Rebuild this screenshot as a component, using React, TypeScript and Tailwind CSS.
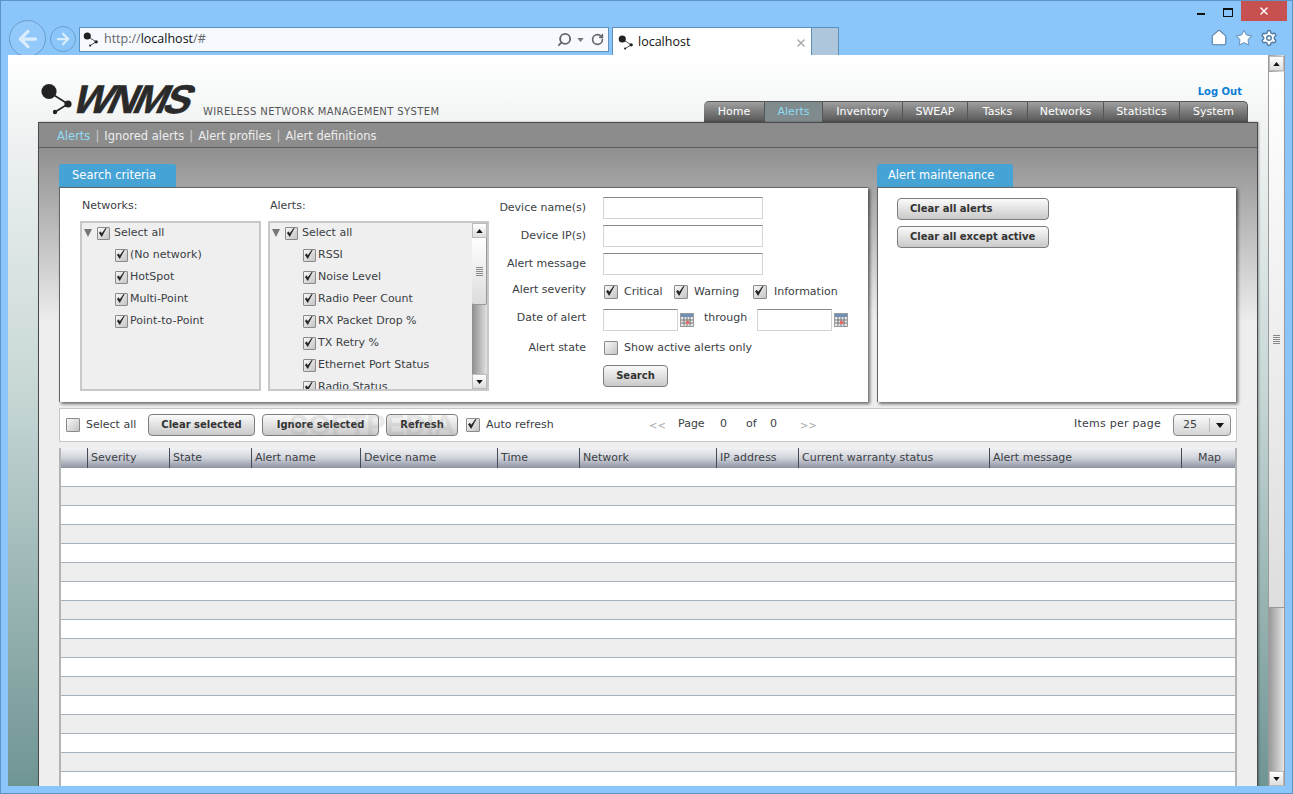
import { ArrowLeft, ArrowRight, Home, RotateCw, Search, Settings, Star, X } from "lucide-react"

const navTabs = [
  { name: "Home", w: "w-[61px]", cls: "rounded-tl-[5px]" },
  { name: "Alerts", w: "w-[58px]", active: true, cls: "" },
  { name: "Inventory", w: "w-[80px]", cls: "" },
  { name: "SWEAP", w: "w-[65px]", cls: "" },
  { name: "Tasks", w: "w-[60px]", cls: "" },
  { name: "Networks", w: "w-[76px]", cls: "" },
  { name: "Statistics", w: "w-[76px]", cls: "" },
  { name: "System", w: "w-[68px]", cls: "rounded-tr-[5px]" },
]

const columns = [
  { name: "", w: "w-[29px]" },
  { name: "Severity", w: "w-[82px]" },
  { name: "State", w: "w-[82px]" },
  { name: "Alert name", w: "w-[109px]" },
  { name: "Device name", w: "w-[137px]" },
  { name: "Time", w: "w-[82px]" },
  { name: "Network", w: "w-[137px]" },
  { name: "IP address", w: "w-[82px]" },
  { name: "Current warranty status", w: "w-[191px]" },
  { name: "Alert message", w: "w-[192px]" },
]

const rows = Array.from({ length: 17 }, (_, i) => i)

function NodeIcon({ className }: { className: string }) {
  return (
    <svg viewBox="0 0 36 32" className={className}>
      <path d="M9 9 L28 21 L15 29" stroke="#222" strokeWidth="1.6" fill="none" />
      <circle cx="9" cy="8.5" r="7.6" fill="#222" />
      <circle cx="28" cy="21" r="3.6" fill="#222" />
      <circle cx="15" cy="29" r="2.2" fill="#222" />
    </svg>
  )
}

function Check({ checked = true, small, cls = "" }: { checked?: boolean; small?: boolean; cls?: string }) {
  return (
    <span className={`relative block shrink-0 rounded-[1px] border border-[#8a8a8a] bg-gradient-to-br from-[#f8f8f8] to-[#c4c4c4] ${small ? "h-[13px] w-[13px]" : "h-[14px] w-[14px]"} ${cls}`}>
      {checked && (
        <svg viewBox="0 0 14 14" className="absolute -top-[1px] -left-[1px] h-full w-full">
          <path d="M3 7.5 L6 12 L11.5 1.5 L6.2 8.6 L4.4 6.2 Z" fill="#222" stroke="#222" strokeWidth="1" />
        </svg>
      )}
    </span>
  )
}

function Btn({ label, w }: { label: string; w: string }) {
  return (
    <button className={`h-[22px] ${w} shrink-0 rounded-[4px] border border-[#7d7d7d] bg-gradient-to-b from-[#fbfbfb] to-[#c9c9c9] pb-[2px] text-[10px] font-bold text-[#333]`}>
      {label}
    </button>
  )
}

function Arrow({ up }: { up?: boolean }) {
  return (
    <span className="flex h-[15px] w-[15px] shrink-0 items-center justify-center border border-[#bbb] bg-gradient-to-b from-white to-[#ddd]">
      <svg viewBox="0 0 8 5" className="h-[4px] w-[7px]">
        <path d={up ? "M0 5 L4 0 L8 5 Z" : "M0 0 L4 5 L8 0 Z"} fill="#111" />
      </svg>
    </span>
  )
}

function Grip() {
  return (
    <span className="flex w-[7px] flex-col gap-[1px]">
      <span className="h-px bg-[#888]" />
      <span className="h-px bg-[#888]" />
      <span className="h-px bg-[#888]" />
      <span className="h-px bg-[#888]" />
      <span className="h-px bg-[#888]" />
    </span>
  )
}

function TreeRow({ label, root }: { label: string; root?: boolean }) {
  return (
    <div className={`flex h-[22px] items-center ${root ? "pl-[2px]" : "pl-[33px]"}`}>
      {root && (
        <svg viewBox="0 0 8 8" className="mr-[5px] h-[8px] w-[8px]">
          <path d="M0 0 H8 L4 8 Z" fill="#777" />
        </svg>
      )}
      <Check small />
      <span className={root ? "ml-[4px]" : "ml-[2px]"}>{label}</span>
    </div>
  )
}

function Field({ label, raised, children }: { label: string; raised?: boolean; children: React.ReactNode }) {
  return (
    <div className="flex h-[22px] items-center">
      <span className={`mr-[17px] w-[97px] shrink-0 text-right ${raised ? "-translate-y-[2px]" : ""}`}>{label}</span>
      {children}
    </div>
  )
}

function TextBox({ w }: { w: string }) {
  return <span className={`block h-[22px] ${w} shrink-0 border border-[#d4d4d4] border-t-[#888] bg-white`} />
}

function Calendar() {
  return (
    <svg viewBox="0 0 14 14" className="ml-[2px] h-[14px] w-[14px] shrink-0">
      <rect x="0.5" y="0.5" width="13" height="13" fill="#e8e8e8" stroke="#9a9a9a" />
      <rect x="1" y="1" width="12" height="3" fill="#6f8fb5" />
      <path d="M1 7 H13 M1 10 H13 M4 4 V13 M7 4 V13 M10 4 V13" stroke="#777" strokeWidth="1" />
      <rect x="6" y="8" width="3" height="3" fill="#e66" />
    </svg>
  )
}

export default function App() {
  return (
    <div className="flex h-[794px] w-[1293px] flex-col overflow-hidden border border-[#5f93c4] bg-[#8bc6fa] font-['DejaVu_Sans',sans-serif] text-[11px] text-[#3b4045]">
      {/* Browser chrome */}
      <div className="relative z-0 flex h-[54px] shrink-0 font-['Open_Sans',sans-serif]">
        <div className="ml-[8px] mt-[19px] flex h-[37px] w-[37px] shrink-0 items-center justify-center rounded-full border border-[#6b9ccb] bg-[#92c9fa]">
          <ArrowLeft size={26} strokeWidth={3} className="text-[#d9edfd]" />
        </div>
        <div className="ml-[4px] mt-[25px] flex h-[26px] w-[26px] shrink-0 items-center justify-center rounded-full border border-[#6b9ccb]">
          <ArrowRight size={18} strokeWidth={3} className="text-[#d9edfd]" />
        </div>
        <div className="ml-[3px] mt-[26px] flex h-[25px] w-[530px] shrink-0 items-center border border-[#5f8fbb] bg-[#f6faff] pl-[3px] pr-[4px] text-[12.5px]">
          <NodeIcon className="h-[15px] w-[17px] shrink-0" />
          <span className="ml-[4px] text-[#666]">http://</span>
          <span className="text-[#111]">localhost</span>
          <span className="text-[#666]">/#</span>
          <Search size={15} strokeWidth={3} className="ml-auto -scale-x-100 text-[#666]" />
          <svg viewBox="0 0 8 5" className="ml-[5px] h-[4px] w-[7px]">
            <path d="M0 0 L4 5 L8 0 Z" fill="#777" />
          </svg>
          <RotateCw size={13} strokeWidth={3} className="ml-[7px] text-[#666]" />
        </div>
        <div className="ml-[3px] mt-[26px] flex h-[28px] w-[200px] shrink-0 items-center border border-b-0 border-[#5f8fbb] bg-white pl-[5px] pr-[4px] pt-[2px] text-[12.5px] text-[#111]">
          <NodeIcon className="h-[15px] w-[17px] shrink-0" />
          <span className="ml-[3px]">localhost</span>
          <X size={12} strokeWidth={3} className="ml-auto text-[#aaa]" />
        </div>
        <div className="mt-[26px] h-[28px] w-[27px] shrink-0 border border-b-0 border-l-0 border-[#5f8fbb] bg-[#adc6dc]" />
        <div className="ml-auto mr-[3px] flex w-[92px] flex-col items-end">
          <div className="flex h-[20px] w-[92px] items-start">
            <span className="mt-[12px] h-[2px] w-[8px] bg-[#111]" />
            <span className="ml-[18px] mt-[7px] h-[9px] w-[10px] border border-t-[2px] border-[#111]" />
            <span className="ml-[8px] flex h-[20px] w-[46px] items-center justify-center bg-[#c75050]">
              <X size={12} strokeWidth={3} className="text-white" />
            </span>
          </div>
        </div>
        <div className="absolute right-[14px] top-[28px] flex gap-[7px]">
          <Home size={18} strokeWidth={1.5} className="fill-white text-[#557ea6]" />
          <Star size={18} strokeWidth={1.5} className="fill-white text-[#6f9ac2]" />
          <Settings size={18} strokeWidth={2} className="fill-white text-[#557ea6]" />
        </div>
      </div>

      {/* Viewport */}
      <div className="relative z-10 mx-[7px] flex h-[731px] w-[1277px] shrink-0">
        <div className="flex w-[1260px] shrink-0 flex-col overflow-hidden bg-[linear-gradient(#ffffff,#eef1f1_12%,#c8d8d7_45%,#6f9593)]">
          {/* Site header */}
          <div className="flex h-[67px] shrink-0 items-end justify-between pl-[32px] pr-[20px]">
            <div className="mb-[4px] flex items-end">
              <NodeIcon className="mb-[3px] h-[32px] w-[36px]" />
              <span className="mb-[1px] inline-block w-[124px] -skew-x-[24deg] font-['Liberation_Sans',sans-serif] text-[40px] leading-[36px] font-bold tracking-[-3px] text-[#2a2a2a] [-webkit-text-stroke:0.6px_#2a2a2a]">
                WNMS
              </span>
              <span className="-mb-[1px] ml-[3px] text-[10px] leading-[14px] tracking-[0.38px] text-[#555]">WIRELESS NETWORK MANAGEMENT SYSTEM</span>
            </div>
            <div className="flex flex-col items-end">
              <a className="mb-[2px] mr-[6px] text-[10px] font-bold text-[#0b7fd6]">Log Out</a>
              <div className="flex">
                {navTabs.map((t) => (
                  <div
                    key={t.name}
                    className={`flex h-[21px] ${t.w} ${t.cls} items-center justify-center border-t border-r border-[#555] ${
                      t.active ? "bg-[#7f8b8d] text-[#8fdcf5]" : "bg-gradient-to-b from-[#a0a0a0] to-[#555] text-white"
                    }`}
                  >
                    {t.name}
                  </div>
                ))}
              </div>
            </div>
          </div>

          {/* App panel */}
          <div className="ml-[30px] mr-[10px] flex min-h-0 flex-1 flex-col border-x border-t border-[#4a4a4a] bg-[#eeeeee] shadow-[1px_0_2px_rgba(0,0,0,0.3)]">
            <div className="flex h-[25px] shrink-0 items-center border-b border-[#5c5c5c] bg-[#8c8c8c] pl-[18px] pt-[4px] text-[11.5px] text-[#eeeeee]">
              <span className="text-[#8fdcf5]">Alerts</span>
              <span className="mx-[5px] text-[#ccc]">|</span>
              <span>Ignored alerts</span>
              <span className="mx-[5px] text-[#ccc]">|</span>
              <span>Alert profiles</span>
              <span className="mx-[5px] text-[#ccc]">|</span>
              <span>Alert definitions</span>
            </div>

            <div className="flex min-h-0 flex-1 flex-col bg-[linear-gradient(#8f8f8f,#a8a8a8_45px,#eeeeee_175px)] pl-[20px] pr-[21px] pt-[16px]">
              <div className="flex shrink-0 gap-[9px]">
                {/* Search criteria */}
                <div className="w-[809px] shrink-0">
                  <div className="flex h-[23px] w-[117px] items-center rounded-t-[3px] bg-[#46a3d6] pl-[13px] text-[11.5px] text-white">Search criteria</div>
                  <div className="flex h-[215px] border-t border-l border-[#666] bg-white pl-[20px] shadow-[2px_2px_3px_rgba(0,0,0,0.55)]">
                    <div className="w-[181px] shrink-0 pt-[11px]">
                      <div className="mb-[8px] h-[14px] pl-[2px] leading-[14px]">Networks:</div>
                      <div className="h-[170px] overflow-hidden border-2 border-[#c8c8c8] bg-[#efefef]">
                        <div className="-mt-[1px]">
                          <TreeRow root label="Select all" />
                          <TreeRow label="(No network)" />
                          <TreeRow label="HotSpot" />
                          <TreeRow label="Multi-Point" />
                          <TreeRow label="Point-to-Point" />
                        </div>
                      </div>
                    </div>
                    <div className="ml-[7px] w-[221px] shrink-0 pt-[11px]">
                      <div className="mb-[8px] h-[14px] pl-[2px] leading-[14px]">Alerts:</div>
                      <div className="flex h-[170px] overflow-hidden border-2 border-[#c8c8c8] bg-[#efefef]">
                        <div className="-mt-[1px] flex-1">
                          <TreeRow root label="Select all" />
                          <TreeRow label="RSSI" />
                          <TreeRow label="Noise Level" />
                          <TreeRow label="Radio Peer Count" />
                          <TreeRow label="RX Packet Drop %" />
                          <TreeRow label="TX Retry %" />
                          <TreeRow label="Ethernet Port Status" />
                          <TreeRow label="Radio Status" />
                        </div>
                        <div className="flex w-[15px] shrink-0 flex-col bg-gradient-to-r from-[#8e8e8e] to-[#e2e2e2]">
                          <Arrow up />
                          <div className="flex h-[67px] shrink-0 items-center justify-center rounded-b-[2px] border-r border-b border-[#999] bg-gradient-to-b from-white to-[#dcdcdc]">
                            <Grip />
                          </div>
                          <div className="flex-1" />
                          <Arrow />
                        </div>
                      </div>
                    </div>
                    <div className="flex flex-1 flex-col gap-[6px] pt-[9px]">
                      <Field label="Device name(s)">
                        <TextBox w="w-[160px]" />
                      </Field>
                      <Field label="Device IP(s)">
                        <TextBox w="w-[160px]" />
                      </Field>
                      <Field label="Alert message">
                        <TextBox w="w-[160px]" />
                      </Field>
                      <Field label="Alert severity" raised>
                        <Check cls="ml-[1px]" />
                        <span className="ml-[6px] w-[50px]">Critical</span>
                        <Check />
                        <span className="ml-[6px] w-[59px]">Warning</span>
                        <Check />
                        <span className="ml-[7px]">Information</span>
                      </Field>
                      <Field label="Date of alert" raised>
                        <TextBox w="w-[75px]" />
                        <Calendar />
                        <span className="ml-[10px] w-[53px] -translate-y-[2px]">through</span>
                        <TextBox w="w-[75px]" />
                        <Calendar />
                      </Field>
                      <Field label="Alert state">
                        <Check checked={false} cls="ml-[1px]" />
                        <span className="ml-[6px]">Show active alerts only</span>
                      </Field>
                      <Field label="">
                        <Btn label="Search" w="w-[65px]" />
                      </Field>
                    </div>
                  </div>
                </div>

                {/* Alert maintenance */}
                <div className="flex-1">
                  <div className="flex h-[23px] w-[136px] items-center rounded-t-[3px] bg-[#46a3d6] pl-[11px] text-[11.5px] text-white">Alert maintenance</div>
                  <div className="flex h-[215px] flex-col gap-[6px] border-t border-l border-[#666] bg-white pl-[19px] pt-[10px] shadow-[2px_2px_3px_rgba(0,0,0,0.55)]">
                    <button className="h-[22px] w-[152px] rounded-[4px] border border-[#7d7d7d] bg-gradient-to-b from-[#fbfbfb] to-[#c9c9c9] pb-[2px] pl-[12px] text-left text-[10px] font-bold text-[#333]">Clear all alerts</button>
                    <button className="h-[22px] w-[152px] rounded-[4px] border border-[#7d7d7d] bg-gradient-to-b from-[#fbfbfb] to-[#c9c9c9] pb-[2px] pl-[12px] text-left text-[10px] font-bold text-[#333]">Clear all except active</button>
                  </div>
                </div>
              </div>

              {/* Toolbar */}
              <div className="relative -mr-[1px] mt-[6px] flex h-[34px] shrink-0 items-center border border-[#c6c6c6] bg-white pl-[6px] pr-[5px]">
                <Check checked={false} />
                <span className="ml-[6px] w-[62px] shrink-0">Select all</span>
                <Btn label="Clear selected" w="w-[107px]" />
                <span className="w-[7px] shrink-0" />
                <Btn label="Ignore selected" w="w-[117px]" />
                <span className="w-[7px] shrink-0" />
                <Btn label="Refresh" w="w-[72px]" />
                <span className="ml-[8px]">
                  <Check />
                </span>
                <span className="ml-[6px] w-[163px] shrink-0">Auto refresh</span>
                <span className="w-[29px] shrink-0 text-[10px] text-[#aaa]">&lt;&lt;</span>
                <span className="w-[42px] shrink-0 -translate-y-[1px]">Page</span>
                <span className="w-[26px] shrink-0 -translate-y-[1px]">0</span>
                <span className="w-[24px] shrink-0 -translate-y-[1px]">of</span>
                <span className="w-[30px] shrink-0 -translate-y-[1px]">0</span>
                <span className="text-[10px] text-[#aaa]">&gt;&gt;</span>
                <span className="ml-auto -translate-y-[1px] tracking-[0.25px]">Items per page</span>
                <div className="ml-[12px] flex h-[22px] w-[58px] items-center rounded-[4px] border border-[#8a8a8a] bg-gradient-to-b from-[#fbfbfb] to-[#d4d4d4] pl-[9px]">
                  <span className="w-[26px]">25</span>
                  <span className="h-[14px] w-px bg-[#bbb]" />
                  <svg viewBox="0 0 8 5" className="ml-[6px] h-[5px] w-[8px]">
                    <path d="M0 0 L4 5 L8 0 Z" fill="#111" />
                  </svg>
                </div>
                <span className="pointer-events-none absolute left-[229px] top-[0px] font-['Liberation_Sans',sans-serif] text-[29px] leading-[32px] font-bold text-[#999]/20">SOFTPEDIA</span>
              </div>

              {/* Alerts table */}
              <div className="-mr-[1px] mt-[6px] min-h-0 flex-1 overflow-hidden border-x-2 border-[#b4b4b4]">
                <div className="-mx-[2px] flex h-[20px] bg-gradient-to-b from-[#f2f2f4] via-[#d0d3da] to-[#8d93a3]">
                  {columns.map((c) => (
                    <div key={c.name} className={`${c.w} shrink-0 truncate border-r border-[#454a58] pl-[3px] leading-[19px]`}>
                      {c.name}
                    </div>
                  ))}
                  <div className="flex-1 text-center leading-[19px]">Map</div>
                </div>
                {rows.map((i) => (
                  <div key={i} className={`h-[19px] border-b border-[#a6b2c0] ${i % 2 === 0 ? "bg-white" : "bg-[#eeeeee]"}`} />
                ))}
              </div>
            </div>
          </div>
        </div>

        {/* Page scrollbar */}
        <div className="flex w-[17px] shrink-0 flex-col border-x border-[#9a9a9a] bg-gradient-to-r from-[#999] to-[#e4e4e4] pt-px">
          <Arrow up />
          <div className="mt-px flex h-[536px] shrink-0 items-center justify-center border-b border-[#999] bg-gradient-to-b from-white to-[#dedede]">
            <Grip />
          </div>
          <div className="flex-1" />
          <Arrow />
        </div>
      </div>
    </div>
  )
}
